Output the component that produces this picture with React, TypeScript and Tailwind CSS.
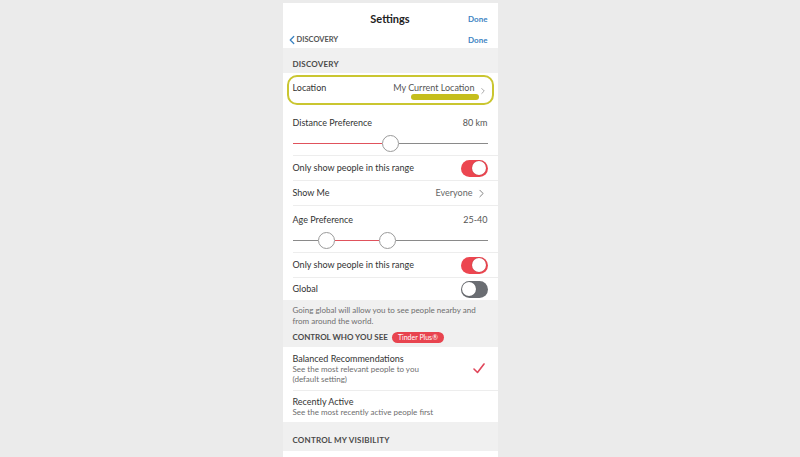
import { ChevronLeft, ChevronRight } from "lucide-react"

function Toggle({ on }: { on: boolean }) {
  return (
    <div
      className={`flex h-[17px] w-[27px] items-center rounded-full p-[1.5px] ${
        on ? "justify-end bg-[#ec4650]" : "justify-start bg-[#6a6d72]"
      }`}
    >
      <div className="h-[14px] w-[14px] rounded-full bg-white shadow-[0_0_1px_rgba(0,0,0,0.4)]" />
    </div>
  )
}

function Thumb() {
  return <div className="h-[17px] w-[17px] shrink-0 rounded-full border border-[#9a9a9a] bg-white" />
}

function Line({ color }: { color: string }) {
  return <div className={`h-px flex-1 ${color}`} />
}

function SectionHeader({ children }: { children: React.ReactNode }) {
  return (
    <div className="px-[10px] text-[8px] font-bold uppercase leading-[10px] tracking-[0.2px] text-[#4a4a4a]">
      {children}
    </div>
  )
}

export default function App() {
  return (
    <div
      className="flex h-[457px] w-full justify-center overflow-hidden bg-[#ebebeb] pt-[3px]"
      style={{ fontFamily: "Lato, 'Open Sans', sans-serif" }}
    >
      <div className="mr-[20px] w-[215px] bg-[#f0f0f0] text-[#333]">
        {/* header */}
        <div className="h-[45px] bg-white px-[10px]">
          <div className="flex h-[32px] items-center justify-between">
            <div className="w-[30px]" />
            <div className="text-[11px] font-bold text-[#222]">Settings</div>
            <div className="w-[30px] text-right text-[8px] font-bold text-[#3b83c2]">Done</div>
          </div>
          <div className="-mt-[1px] flex h-[12px] items-center justify-between">
            <div className="-ml-[8px] flex items-center">
              <ChevronLeft size={14} strokeWidth={2.2} className="text-[#3b83c2]" />
              <span className="-ml-[2px] text-[7.5px] font-bold text-[#555]">DISCOVERY</span>
            </div>
            <div className="text-[8px] font-bold text-[#3b83c2]">Done</div>
          </div>
        </div>

        <div className="flex h-[25px] items-end pb-[4px]">
          <SectionHeader>Discovery</SectionHeader>
        </div>

        <div className="bg-white">
          {/* location */}
          <div className="relative flex h-[32px] items-center justify-between px-[10px]">
            <span className="mt-[-3px] text-[9px]">Location</span>
            <div className="mt-[-3px] flex items-center">
              <span className="text-[9px] text-[#555]">My Current Location</span>
              <ChevronRight size={10} strokeWidth={1.5} className="ml-[3px] mt-[6px] text-[#777]" />
            </div>
            <div className="absolute left-[128px] top-[21px] h-[6px] w-[68px] rounded-full bg-[#c5be1c]" />
            <div className="absolute left-[4px] right-[4px] top-[2px] h-[30px] rounded-[10px] border-2 border-[#cac630]" />
          </div>

          {/* distance */}
          <div className="h-[50px] px-[10px] pt-[11px]">
            <div className="flex items-center justify-between text-[9px]">
              <span>Distance Preference</span>
              <span className="text-[#555]">80 km</span>
            </div>
            <div className="mt-[5px] flex items-center">
              <Line color="bg-[#e0525c]" />
              <Thumb />
              <Line color="bg-[#8a8a8a]" />
            </div>
          </div>

          <div className="ml-[10px] flex h-[25px] items-center justify-between border-t border-[#ededed] pr-[10px]">
            <span className="text-[9px]">Only show people in this range</span>
            <Toggle on />
          </div>

          <div className="ml-[10px] flex h-[25px] items-center justify-between border-t border-[#ededed] pr-[10px]">
            <span className="text-[9px]">Show Me</span>
            <div className="flex items-center">
              <span className="text-[9px] text-[#666]">Everyone</span>
              <ChevronRight size={13} strokeWidth={1.5} className="ml-[2px] text-[#666]" />
            </div>
          </div>

          {/* age */}
          <div className="ml-[10px] h-[47px] border-t border-[#ededed] pr-[10px] pt-[7px]">
            <div className="flex items-center justify-between text-[9px]">
              <span>Age Preference</span>
              <span className="text-[#555]">25-40</span>
            </div>
            <div className="mt-[5px] flex items-center">
              <div className="h-px w-[25px] bg-[#8a8a8a]" />
              <Thumb />
              <div className="h-px w-[44px] bg-[#e0525c]" />
              <Thumb />
              <Line color="bg-[#8a8a8a]" />
            </div>
          </div>

          <div className="ml-[10px] flex h-[25px] items-center justify-between border-t border-[#ededed] pr-[10px]">
            <span className="text-[9px]">Only show people in this range</span>
            <Toggle on />
          </div>

          <div className="ml-[10px] flex h-[23px] items-center justify-between border-t border-[#ededed] pr-[10px]">
            <span className="text-[9px]">Global</span>
            <Toggle on={false} />
          </div>
        </div>

        <div className="h-[47px] px-[10px] pt-[5px]">
          <p className="pr-[8px] text-[8px] leading-[11px] text-[#6e6e6e]">
            Going global will allow you to see people nearby and from around the world.
          </p>
          <div className="mt-[4px] flex items-center">
            <span className="text-[8px] font-bold text-[#4a4a4a]">CONTROL WHO YOU SEE</span>
            <span className="ml-[4px] rounded-full bg-[#e8444f] px-[6px] py-[1px] text-[7px] leading-[9px] text-white">
              Tinder Plus®
            </span>
          </div>
        </div>

        <div className="bg-white">
          <div className="flex h-[43px] items-center justify-between px-[10px]">
            <div>
              <div className="text-[9px] leading-[11px]">Balanced Recommendations</div>
              <div className="text-[8px] leading-[10px] text-[#6e6e6e]">See the most relevant people to you</div>
              <div className="text-[8px] leading-[10px] text-[#6e6e6e]">(default setting)</div>
            </div>
            <svg width="12" height="11" viewBox="0 0 12 11" className="mr-[3px]">
              <path d="M1 6 L4.5 9.5 L11 1" fill="none" stroke="#e0465a" strokeWidth="1.6" strokeLinecap="round" strokeLinejoin="round" />
            </svg>
          </div>
          <div className="ml-[10px] flex h-[32px] flex-col justify-center border-t border-[#ededed] pr-[10px]">
            <div className="text-[9px] leading-[11px]">Recently Active</div>
            <div className="text-[8px] leading-[10px] text-[#6e6e6e]">See the most recently active people first</div>
          </div>
        </div>

        <div className="flex h-[29px] items-end pb-[6px]">
          <SectionHeader>Control my visibility</SectionHeader>
        </div>
        <div className="h-[20px] bg-white" />
      </div>
    </div>
  )
}
